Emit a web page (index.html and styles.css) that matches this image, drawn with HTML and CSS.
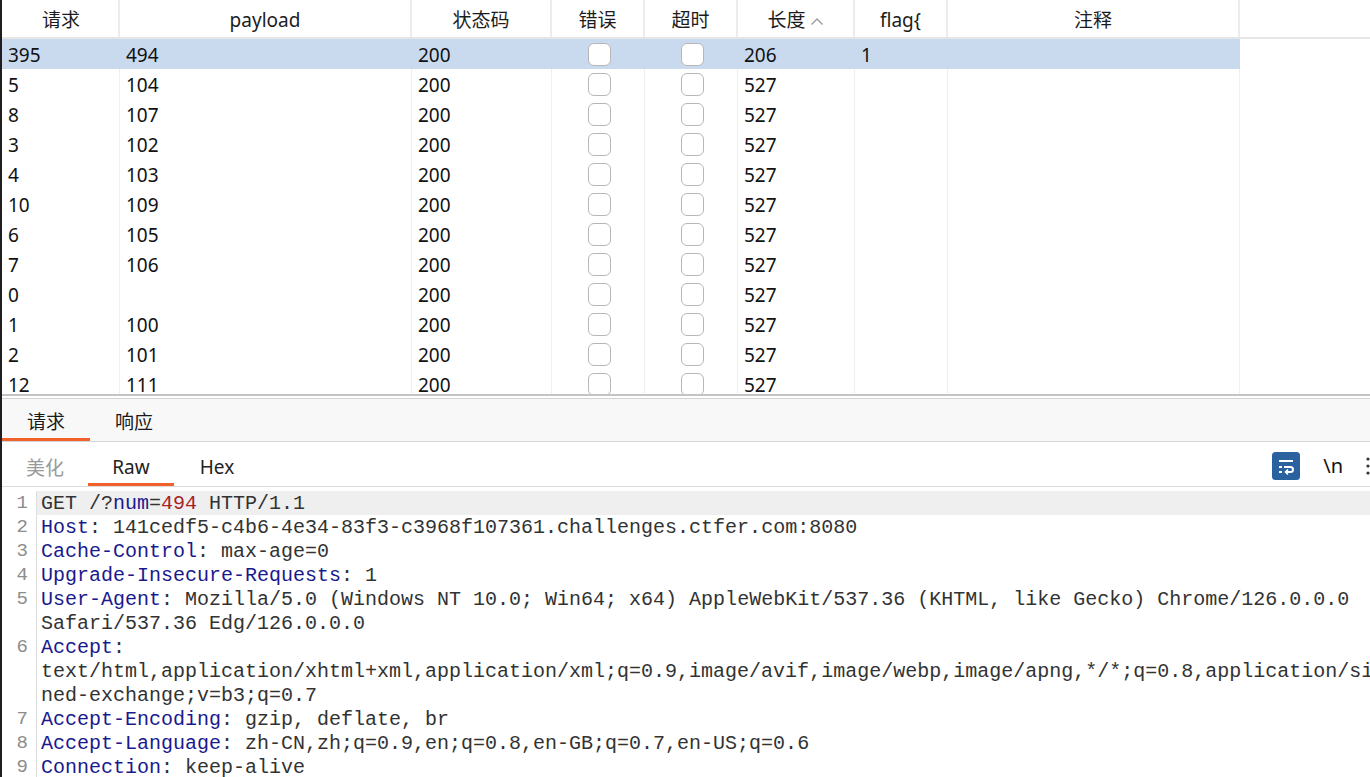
FILE: index.html
```html
<!DOCTYPE html>
<html lang="zh">
<head>
<meta charset="utf-8">
<title>Intruder results</title>
<link rel="stylesheet" href="styles.css">
</head>
<body>
<div class="app">
  <div class="table">
    <div class="row head">
      <div class="cell">请求</div>
      <div class="cell">payload</div>
      <div class="cell">状态码</div>
      <div class="cell">错误</div>
      <div class="cell">超时</div>
      <div class="cell">长度 <svg class="sort" width="14" height="9" viewBox="0 0 14 9"><polyline points="1.5,7.5 7,2 12.5,7.5" fill="none" stroke="#9a9a9a" stroke-width="1.4"/></svg></div>
      <div class="cell">flag{</div>
      <div class="cell">注释</div>
      <div class="cell filler"></div>
    </div>
    <div class="row sel"><div class="cell">395</div><div class="cell">494</div><div class="cell">200</div><div class="cell c"><span class="cb"></span></div><div class="cell c"><span class="cb"></span></div><div class="cell">206</div><div class="cell">1</div><div class="cell"></div><div class="cell filler"></div></div>
    <div class="row"><div class="cell">5</div><div class="cell">104</div><div class="cell">200</div><div class="cell c"><span class="cb"></span></div><div class="cell c"><span class="cb"></span></div><div class="cell">527</div><div class="cell"></div><div class="cell"></div><div class="cell filler"></div></div>
    <div class="row"><div class="cell">8</div><div class="cell">107</div><div class="cell">200</div><div class="cell c"><span class="cb"></span></div><div class="cell c"><span class="cb"></span></div><div class="cell">527</div><div class="cell"></div><div class="cell"></div><div class="cell filler"></div></div>
    <div class="row"><div class="cell">3</div><div class="cell">102</div><div class="cell">200</div><div class="cell c"><span class="cb"></span></div><div class="cell c"><span class="cb"></span></div><div class="cell">527</div><div class="cell"></div><div class="cell"></div><div class="cell filler"></div></div>
    <div class="row"><div class="cell">4</div><div class="cell">103</div><div class="cell">200</div><div class="cell c"><span class="cb"></span></div><div class="cell c"><span class="cb"></span></div><div class="cell">527</div><div class="cell"></div><div class="cell"></div><div class="cell filler"></div></div>
    <div class="row"><div class="cell">10</div><div class="cell">109</div><div class="cell">200</div><div class="cell c"><span class="cb"></span></div><div class="cell c"><span class="cb"></span></div><div class="cell">527</div><div class="cell"></div><div class="cell"></div><div class="cell filler"></div></div>
    <div class="row"><div class="cell">6</div><div class="cell">105</div><div class="cell">200</div><div class="cell c"><span class="cb"></span></div><div class="cell c"><span class="cb"></span></div><div class="cell">527</div><div class="cell"></div><div class="cell"></div><div class="cell filler"></div></div>
    <div class="row"><div class="cell">7</div><div class="cell">106</div><div class="cell">200</div><div class="cell c"><span class="cb"></span></div><div class="cell c"><span class="cb"></span></div><div class="cell">527</div><div class="cell"></div><div class="cell"></div><div class="cell filler"></div></div>
    <div class="row"><div class="cell">0</div><div class="cell"></div><div class="cell">200</div><div class="cell c"><span class="cb"></span></div><div class="cell c"><span class="cb"></span></div><div class="cell">527</div><div class="cell"></div><div class="cell"></div><div class="cell filler"></div></div>
    <div class="row"><div class="cell">1</div><div class="cell">100</div><div class="cell">200</div><div class="cell c"><span class="cb"></span></div><div class="cell c"><span class="cb"></span></div><div class="cell">527</div><div class="cell"></div><div class="cell"></div><div class="cell filler"></div></div>
    <div class="row"><div class="cell">2</div><div class="cell">101</div><div class="cell">200</div><div class="cell c"><span class="cb"></span></div><div class="cell c"><span class="cb"></span></div><div class="cell">527</div><div class="cell"></div><div class="cell"></div><div class="cell filler"></div></div>
    <div class="row"><div class="cell">12</div><div class="cell">111</div><div class="cell">200</div><div class="cell c"><span class="cb"></span></div><div class="cell c"><span class="cb"></span></div><div class="cell">527</div><div class="cell"></div><div class="cell"></div><div class="cell filler"></div></div>
  </div>
  <div class="split"></div>
  <div class="tabs">
    <div class="tab active">请求</div>
    <div class="tab">响应</div>
  </div>
  <div class="subtabs">
    <div class="stab muted">美化</div>
    <div class="stab active">Raw</div>
    <div class="stab">Hex</div>
    <div class="tools">
      <svg class="wrapicon" width="28" height="28" viewBox="0 0 28 28">
        <rect x="0" y="0" width="28" height="28" rx="3.5" fill="#2a62a0"/>
        <line x1="7" y1="9" x2="21" y2="9" stroke="#fff" stroke-width="2"/>
        <path d="M12 15 H18.5 a2.5 2.5 0 0 1 0 5 H14" fill="none" stroke="#fff" stroke-width="2"/>
        <path d="M16 17.5 L13.5 20 L16 22.5" fill="none" stroke="#fff" stroke-width="1.6"/>
        <line x1="7" y1="15" x2="10" y2="15" stroke="#fff" stroke-width="2"/>
        <line x1="7" y1="20" x2="10" y2="20" stroke="#fff" stroke-width="2"/>
      </svg>
      <span class="nl">\n</span>
      <svg class="more" width="6" height="22" viewBox="0 0 6 22">
        <circle cx="3" cy="4" r="1.6" fill="#333"/>
        <circle cx="3" cy="11" r="1.6" fill="#333"/>
        <circle cx="3" cy="18" r="1.6" fill="#333"/>
      </svg>
    </div>
  </div>
  <div class="editor">
    <div class="ln">1</div><div class="code cur">GET /?<span class="k">num</span>=<span class="v">494</span> HTTP/1.1</div>
    <div class="ln">2</div><div class="code"><span class="k">Host</span>: 141cedf5-c4b6-4e34-83f3-c3968f107361.challenges.ctfer.com:8080</div>
    <div class="ln">3</div><div class="code"><span class="k">Cache-Control</span>: max-age=0</div>
    <div class="ln">4</div><div class="code"><span class="k">Upgrade-Insecure-Requests</span>: 1</div>
    <div class="ln">5</div><div class="code"><span class="k">User-Agent</span>: Mozilla/5.0 (Windows NT 10.0; Win64; x64) AppleWebKit/537.36 (KHTML, like Gecko) Chrome/126.0.0.0</div>
    <div class="ln"></div><div class="code">Safari/537.36 Edg/126.0.0.0</div>
    <div class="ln">6</div><div class="code"><span class="k">Accept</span>:</div>
    <div class="ln"></div><div class="code">text/html,application/xhtml+xml,application/xml;q=0.9,image/avif,image/webp,image/apng,*/*;q=0.8,application/si</div>
    <div class="ln"></div><div class="code">ned-exchange;v=b3;q=0.7</div>
    <div class="ln">7</div><div class="code"><span class="k">Accept-Encoding</span>: gzip, deflate, br</div>
    <div class="ln">8</div><div class="code"><span class="k">Accept-Language</span>: zh-CN,zh;q=0.9,en;q=0.8,en-GB;q=0.7,en-US;q=0.6</div>
    <div class="ln">9</div><div class="code"><span class="k">Connection</span>: keep-alive</div>
  </div>
</div>
</body>
</html>
```
FILE: styles.css
```css
* { box-sizing: border-box; }
html, body {
  margin: 0;
  padding: 0;
  width: 1370px;
  height: 777px;
  overflow: hidden;
  background: #ffffff;
}
body {
  font-family: "Noto Sans", "Noto Sans CJK SC", sans-serif;
  color: #1a1a1a;
}
.app {
  height: 777px;
  border-left: 2px solid #1e1e1e;
  display: flex;
  flex-direction: column;
  overflow: hidden;
}

/* ---------- results table ---------- */
.table {
  height: 394px;
  flex: none;
  overflow: hidden;
}
.row {
  display: grid;
  grid-template-columns: 118px 292px 140px 93px 93px 117px 93px 292px 1fr;
  height: 30px;
}
.cell {
  font-size: 19px;
  line-height: 30px;
  padding-left: 6px;
  padding-top: 1px;
  white-space: nowrap;
  overflow: hidden;
  border-right: 1px solid #efefef;
  color: #111;
}
.cell.filler { border-right: none; }
.cell.c {
  display: flex;
  align-items: center;
  justify-content: center;
  padding-left: 0;
  padding-top: 0;
}
.row.head {
  height: 39px;
  border-bottom: 2px solid #e6e6e6;
}
.row.head .cell {
  text-align: center;
  padding-left: 0;
  padding-top: 3px;
  line-height: 34px;
  font-size: 19px;
  color: #1c1c1c;
  border-right: 2px solid #ebebeb;
  display: flex;
  align-items: center;
  justify-content: center;
  gap: 4px;
}
.row.head .cell:first-child { padding-left: 2px; }
.row.head .cell.filler { border-right: none; }
.sort { margin-top: 2px; }
.row.sel .cell { background: #c9daef; border-right-color: #c9daef; }
.row.sel .cell.filler { background: #ffffff; }
.cb {
  display: block;
  width: 23px;
  height: 23px;
  margin-left: 2px;
  border: 1.5px solid #b7b7b7;
  border-radius: 6px;
  background: #ffffff;
}

/* ---------- split ---------- */
.split {
  flex: none;
  height: 5px;
  border-top: 2px solid #c4c4c4;
  border-bottom: 1px solid #d2d2d2;
  background: #ffffff;
}

/* ---------- request / response tabs ---------- */
.tabs {
  flex: none;
  height: 43px;
  background: #f8f8f8;
  border-bottom: 1px solid #d6d6d6;
  display: flex;
  align-items: stretch;
}
.tab {
  width: 88px;
  font-size: 19px;
  display: flex;
  align-items: center;
  justify-content: center;
  padding-top: 5px;
  color: #1a1a1a;
  border-bottom: 3px solid transparent;
}
.tab.active { border-bottom-color: #f2602c; }

/* ---------- pretty / raw / hex ---------- */
.subtabs {
  flex: none;
  height: 45px;
  background: #ffffff;
  border-bottom: 1px solid #dcdcdc;
  display: flex;
  align-items: stretch;
}
.stab {
  width: 86px;
  font-size: 19px;
  display: flex;
  align-items: center;
  justify-content: center;
  padding-top: 8px;
  color: #222;
  border-bottom: 3px solid transparent;
}
.stab.muted { color: #9a9a9a; }
.stab.active { border-bottom-color: #f2602c; }
.tools {
  margin-left: auto;
  display: flex;
  align-items: center;
  padding-top: 3px;
  margin-right: -1px;
}
.wrapicon { display: block; flex: none; }
.nl {
  font-size: 20px;
  margin-left: 23px;
  margin-right: 22px;
  color: #111;
}
.more { display: block; flex: none; }

/* ---------- raw editor ---------- */
.editor {
  flex: 1;
  display: grid;
  grid-template-columns: 35px 1fr;
  grid-auto-rows: 24px;
  padding-top: 4px;
  overflow: hidden;
  font-family: "Liberation Mono", "Courier New", monospace;
  font-size: 20px;
  line-height: 24px;
}
.ln {
  text-align: right;
  padding-right: 8px;
  color: #8c8c8c;
  border-right: 1px solid #dedede;
  font-size: 19px;
}
.code {
  padding-left: 4px;
  padding-top: 1px;
  white-space: pre;
  overflow: hidden;
  color: #333333;
}
.code.cur { background: #efefef; }
.k { color: #1a1a8e; }
.v { color: #a8231f; }
```
